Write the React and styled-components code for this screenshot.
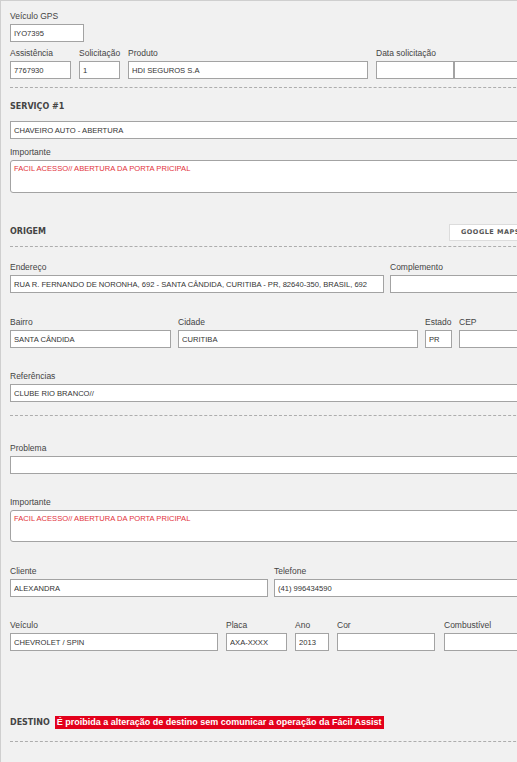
import styled, { createGlobalStyle } from "styled-components"

const GlobalStyle = createGlobalStyle`
  html, body {
    margin: 0;
    padding: 0;
    background: #f1f1f1;
    overflow: hidden;
  }
  * { box-sizing: border-box; }
`

const Panel = styled.div`
  width: 560px;
  min-height: 762px;
  border-top: 1px solid #cfcfcf;
  border-left: 1px solid #cfcfcf;
  padding: 10px 19px 0 9px;
  background: #f1f1f1;
  font-family: "Liberation Sans", Arial, sans-serif;
`

const Row = styled.div`
  display: flex;
  gap: ${p => p.$gap ?? 8}px;
  margin-top: ${p => p.$mt || 0}px;
`

const Field = styled.div`
  flex: ${p => (p.$w ? `0 0 ${p.$w}px` : "1 1 auto")};
  min-width: 0;
  margin-left: ${p => p.$ml || 0}px;
`

const Label = styled.label`
  display: block;
  height: 12px;
  margin-bottom: 1px;
  font-size: 8.5px;
  line-height: 11px;
  color: #444;
  white-space: nowrap;
`

const TextBox = styled.input`
  display: block;
  width: ${p => (p.$w ? `${p.$w}px` : "100%")};
  flex: ${p => (p.$w ? "0 0 auto" : "1 1 auto")};
  min-width: 0;
  height: 18px;
  margin: 0;
  padding: 0 3px;
  border: 1px solid #a3a3a3;
  border-radius: 0;
  background: #fff;
  font-family: "Liberation Sans", Arial, sans-serif;
  font-size: 7.6px;
  color: #333;
  outline: none;
`

const Pair = styled.div`
  display: flex;
`

const NoteArea = styled.textarea`
  display: block;
  width: 100%;
  height: ${p => p.$h || 33}px;
  margin: 0;
  padding: 3px 3px;
  border: 1px solid #a3a3a3;
  border-radius: 3px;
  background: #fff;
  font-family: "Liberation Sans", Arial, sans-serif;
  font-size: 7.6px;
  color: #e2323c;
  resize: none;
  outline: none;
`

const Divider = styled.div`
  border-top: 1px dashed #adadad;
  margin-top: ${p => p.$mt || 0}px;
`

const Heading = styled.div`
  font-family: "DejaVu Sans", Verdana, sans-serif;
  font-weight: bold;
  font-size: 8px;
  line-height: 12px;
  color: #444;
  margin-top: ${p => p.$mt || 0}px;
`

const HeadRow = styled.div`
  display: grid;
  grid-template-columns: ${p => p.$cols || "1fr auto"};
  align-items: center;
  height: ${p => p.$h || 18}px;
  margin-top: ${p => p.$mt || 0}px;
`

const MapsButton = styled.button`
  height: 17px;
  padding: 0 11px;
  border: 1px solid #dcdcdc;
  background: #fff;
  font-family: "DejaVu Sans", Verdana, sans-serif;
  font-weight: bold;
  font-size: 6.5px;
  letter-spacing: 0.5px;
  color: #555;
  white-space: nowrap;
  text-align: left;
`

const Notice = styled.span`
  display: inline-block;
  height: 13px;
  padding: 0 2px;
  background: #e3001b;
  color: #fff;
  font-family: "Liberation Sans", Arial, sans-serif;
  font-weight: bold;
  font-size: 9px;
  line-height: 13px;
  white-space: nowrap;
`

const DestinoRow = styled.div`
  display: flex;
  align-items: center;
  gap: 5px;
  height: 13px;
  margin-top: ${p => p.$mt || 0}px;
`

const box = (value, w) => <TextBox readOnly value={value} $w={w} />

export default function App() {
  return (
    <>
      <GlobalStyle />
      <Panel>
        <Row>
          <Field $w={74}>
            <Label>Veículo GPS</Label>
            {box("IYO7395")}
          </Field>
        </Row>

        <Row $mt={6}>
          <Field $w={61}>
            <Label>Assistência</Label>
            {box("7767930")}
          </Field>
          <Field $w={41}>
            <Label>Solicitação</Label>
            {box("1")}
          </Field>
          <Field $w={240}>
            <Label>Produto</Label>
            {box("HDI SEGUROS S.A")}
          </Field>
          <Field>
            <Label>Data solicitação</Label>
            <Pair>
              {box("", 78)}
              {box("")}
            </Pair>
          </Field>
        </Row>

        <Divider $mt={8} />

        <Heading $mt={13}>SERVIÇO #1</Heading>
        <Row $mt={8}>
          <Field>{box("CHAVEIRO AUTO - ABERTURA")}</Field>
        </Row>
        <Row $mt={8}>
          <Field>
            <Label>Importante</Label>
            <NoteArea readOnly value="FACIL ACESSO// ABERTURA DA PORTA PRICIPAL" />
          </Field>
        </Row>

        <HeadRow $mt={30} $cols="439px auto">
          <Heading>ORIGEM</Heading>
          <MapsButton>GOOGLE MAPS</MapsButton>
        </HeadRow>
        <Divider $mt={5} />

        <Row $mt={15} $gap={6}>
          <Field $w={374}>
            <Label>Endereço</Label>
            {box("RUA R. FERNANDO DE NORONHA, 692 - SANTA CÂNDIDA, CURITIBA - PR, 82640-350, BRASIL, 692")}
          </Field>
          <Field>
            <Label>Complemento</Label>
            {box("")}
          </Field>
        </Row>

        <Row $mt={24} $gap={7}>
          <Field $w={161}>
            <Label>Bairro</Label>
            {box("SANTA CÂNDIDA")}
          </Field>
          <Field $w={240}>
            <Label>Cidade</Label>
            {box("CURITIBA")}
          </Field>
          <Field $w={27}>
            <Label>Estado</Label>
            {box("PR")}
          </Field>
          <Field>
            <Label>CEP</Label>
            {box("")}
          </Field>
        </Row>

        <Row $mt={23}>
          <Field>
            <Label>Referências</Label>
            {box("CLUBE RIO BRANCO//")}
          </Field>
        </Row>

        <Divider $mt={13} />

        <Row $mt={27}>
          <Field>
            <Label>Problema</Label>
            {box("")}
          </Field>
        </Row>

        <Row $mt={23}>
          <Field>
            <Label>Importante</Label>
            <NoteArea readOnly $h={32} value="FACIL ACESSO// ABERTURA DA PORTA PRICIPAL" />
          </Field>
        </Row>

        <Row $mt={24} $gap={6}>
          <Field $w={258}>
            <Label>Cliente</Label>
            {box("ALEXANDRA")}
          </Field>
          <Field>
            <Label>Telefone</Label>
            {box("(41) 996434590")}
          </Field>
        </Row>

        <Row $mt={23}>
          <Field $w={208}>
            <Label>Veículo</Label>
            {box("CHEVROLET / SPIN")}
          </Field>
          <Field $w={61}>
            <Label>Placa</Label>
            {box("AXA-XXXX")}
          </Field>
          <Field $w={34}>
            <Label>Ano</Label>
            {box("2013")}
          </Field>
          <Field $w={98}>
            <Label>Cor</Label>
            {box("")}
          </Field>
          <Field $ml={1}>
            <Label>Combustível</Label>
            {box("")}
          </Field>
        </Row>

        <DestinoRow $mt={65}>
          <Heading>DESTINO</Heading>
          <Notice>É proibida a alteração de destino sem comunicar a operação da Fácil Assist</Notice>
        </DestinoRow>
        <Divider $mt={12} />
      </Panel>
    </>
  )
}
